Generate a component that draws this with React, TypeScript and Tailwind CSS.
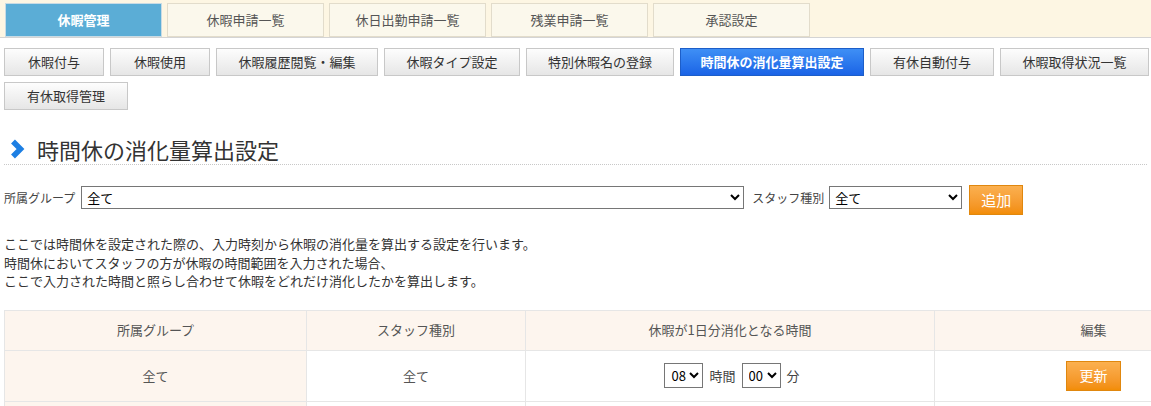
import React from 'react';

const font = { fontFamily: "'Noto Sans CJK JP', 'Noto Sans', sans-serif" };

const topTabs = ['休暇管理', '休暇申請一覧', '休日出勤申請一覧', '残業申請一覧', '承認設定'];

const subButtons = [
  { label: '休暇付与', w: 'w-[100px]' },
  { label: '休暇使用', w: 'w-[100px]' },
  { label: '休暇履歴閲覧・編集', w: 'w-[162px]' },
  { label: '休暇タイプ設定', w: 'w-[136px]' },
  { label: '特別休暇名の登録', w: 'w-[148px]' },
  { label: '時間休の消化量算出設定', w: 'w-[184px]' },
  { label: '有休自動付与', w: 'w-[124px]' },
  { label: '休暇取得状況一覧', w: 'w-[149px]' },
  { label: '有休取得管理', w: 'w-[124px]' },
];

const hours = ['00', '01', '02', '03', '04', '05', '06', '07', '08', '09', '10', '11', '12'];
const minutes = ['00', '15', '30', '45'];

export default function App() {
  return (
    <div className="w-[1151px] h-[406px] overflow-hidden bg-white text-[#333]" style={font}>
      {/* Top tab bar */}
      <div className="bg-[#fdf6e3] border-b border-[#d4d4d4] pt-[3px] pl-[5px] flex gap-[5px] h-[38px]">
        {topTabs.map((t, i) => (
          <div
            key={t}
            className={
              i === 0
                ? 'w-[157px] h-[34px] flex items-center justify-center bg-[#5badd6] border border-[#c9dbe4] text-white font-bold text-[13px]'
                : 'w-[157px] h-[34px] flex items-center justify-center bg-[#fbf8ec] border border-[#e2dccb] text-[#555] text-[13px]'
            }
          >
            {t}
          </div>
        ))}
      </div>

      <div className="px-[4px]">
        {/* Sub buttons */}
        <div className="mt-[10px] flex flex-wrap gap-[6px] w-[1147px]">
          {subButtons.map((b) => {
            const active = b.label === '時間休の消化量算出設定';
            return (
              <div
                key={b.label}
                className={
                  (active
                    ? 'h-[28px] flex items-center justify-center text-[13px] text-white font-bold border border-[#1d5ec8] bg-gradient-to-b from-[#3f8ff5] to-[#1b63e6] '
                    : 'h-[28px] flex items-center justify-center text-[13px] text-[#333] border border-[#c8c8c8] bg-gradient-to-b from-[#fdfdfd] to-[#e6e6e6] ') + b.w
                }
              >
                {b.label}
              </div>
            );
          })}
        </div>

        {/* Heading */}
        <div className="mt-[24px] h-[31px] flex items-center border-b border-dotted border-[#c8c8c8]">
          <svg width="18" height="20" viewBox="0 0 18 20" className="ml-[4px] shrink-0">
            <path d="M5 2.5 L12.5 10 L5 17.5" fill="none" stroke="#1d7fe3" strokeWidth="5.5" strokeLinejoin="miter" />
          </svg>
          <h1 className="ml-[11px] text-[22px] leading-none text-[#333]">時間休の消化量算出設定</h1>
        </div>

        {/* Filter row */}
        <div className="mt-[21px] flex items-start">
          <div className="flex items-center h-[23px]">
            <span className="text-[12px] text-[#444] mr-[6px]">所属グループ</span>
            <select className="w-[663px] h-[23px] border border-[#767676] bg-white text-[13px] text-black pl-[1px]" style={font}>
              <option>全て</option>
            </select>
          </div>
          <div className="flex items-center h-[23px] ml-[8px]">
            <span className="text-[12px] text-[#444] mr-[5px]">スタッフ種別</span>
            <select className="w-[133px] h-[23px] border border-[#767676] bg-white text-[13px] text-black pl-[1px]" style={font}>
              <option>全て</option>
            </select>
          </div>
          <button className="ml-[7px] -mt-[1px] w-[54px] h-[30px] border border-[#e0870e] bg-gradient-to-b from-[#fbb04f] to-[#f28d05] text-white text-[15px]">
            追加
          </button>
        </div>

        {/* Description */}
        <div className="mt-[20px] text-[13px] leading-[18.5px] text-[#333]">
          <p>ここでは時間休を設定された際の、入力時刻から休暇の消化量を算出する設定を行います。</p>
          <p>時間休においてスタッフの方が休暇の時間範囲を入力された場合、</p>
          <p>ここで入力された時間と照らし合わせて休暇をどれだけ消化したかを算出します。</p>
        </div>

        {/* Table */}
        <table className="mt-[19px] w-[1248px] border-collapse table-fixed text-[13px] text-[#555]">
          <colgroup>
            <col className="w-[302px]" />
            <col className="w-[219px]" />
            <col className="w-[409px]" />
            <col className="w-[318px]" />
          </colgroup>
          <thead>
            <tr className="h-[40px] bg-[#fdf5ee]">
              <th className="border border-[#e6e6e6] font-normal">所属グループ</th>
              <th className="border border-[#e6e6e6] font-normal">スタッフ種別</th>
              <th className="border border-[#e6e6e6] font-normal">休暇が1日分消化となる時間</th>
              <th className="border border-[#e6e6e6] font-normal">編集</th>
            </tr>
          </thead>
          <tbody>
            <tr className="h-[51px]">
              <td className="border border-[#e6e6e6] bg-[#fdf5ee] text-center">全て</td>
              <td className="border border-[#e6e6e6] text-center">全て</td>
              <td className="border border-[#e6e6e6]">
                <div className="flex items-center justify-center gap-[6px] pl-[4px] text-[#444]">
                  <select defaultValue="08" className="w-[39px] h-[25px] border border-[#767676] bg-white text-[13px] text-black pl-[2px]" style={font}>
                    {hours.map((h) => (
                      <option key={h}>{h}</option>
                    ))}
                  </select>
                  <span>時間</span>
                  <select defaultValue="00" className="w-[39px] h-[25px] border border-[#767676] bg-white text-[13px] text-black pl-[2px]" style={font}>
                    {minutes.map((m) => (
                      <option key={m}>{m}</option>
                    ))}
                  </select>
                  <span>分</span>
                </div>
              </td>
              <td className="border border-[#e6e6e6] text-center">
                <button className="w-[55px] h-[30px] border border-[#e0870e] bg-gradient-to-b from-[#fbb04f] to-[#f28d05] text-white text-[14px]">
                  更新
                </button>
              </td>
            </tr>
            <tr className="h-[51px]">
              <td className="border border-[#e6e6e6] bg-[#fdf5ee]"></td>
              <td className="border border-[#e6e6e6]"></td>
              <td className="border border-[#e6e6e6]"></td>
              <td className="border border-[#e6e6e6]"></td>
            </tr>
          </tbody>
        </table>
      </div>
    </div>
  );
}
